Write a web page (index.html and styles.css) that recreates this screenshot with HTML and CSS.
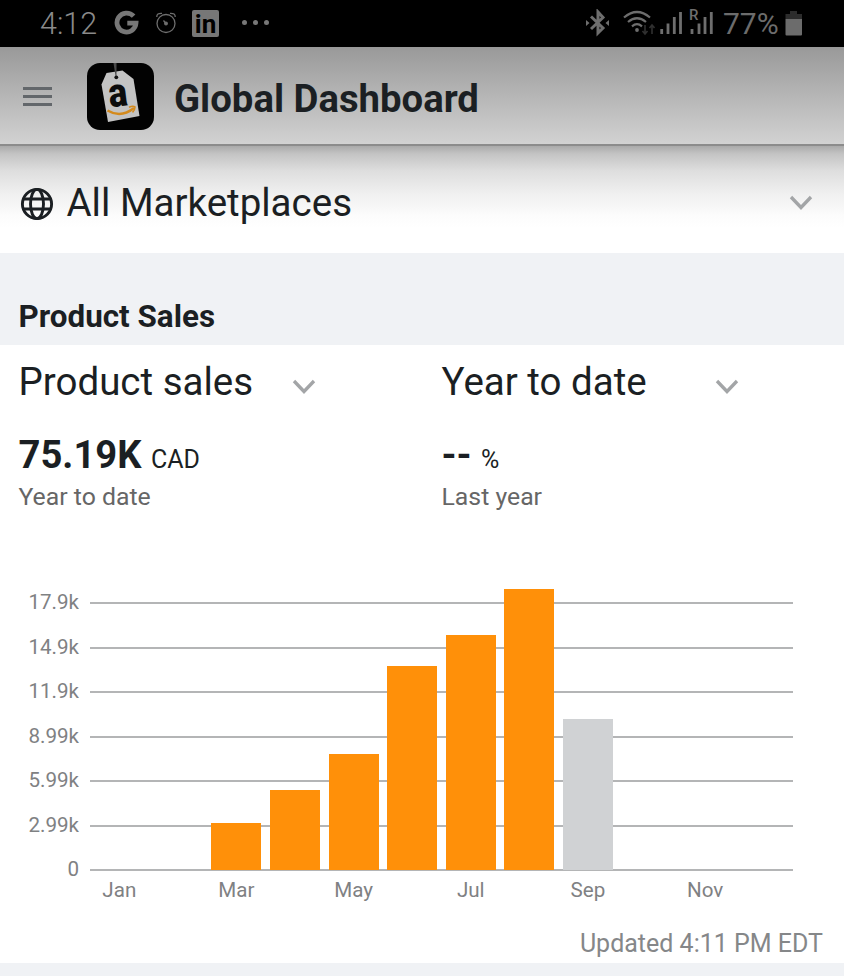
FILE: index.html
```html
<!DOCTYPE html>
<html lang="en">
<head>
<meta charset="utf-8">
<title>Global Dashboard</title>
<link rel="stylesheet" href="styles.css">
</head>
<body>
<div class="status">
  <span class="clock">4:12</span>
  <svg class="g" width="26" height="26" viewBox="0 0 26 26"><path d="M19.600 6.200A9.500 9.500 0 1 0 22 13.200H13.300" fill="none" stroke="currentColor" stroke-width="4.800"/></svg>
  <svg class="alarm" width="22" height="24" viewBox="0 0 22 24" fill="none" stroke="currentColor" stroke-width="1.3"><circle cx="11" cy="12.500" r="9"/><path d="M1.800 6Q1.500 2 7 2.300M20.200 6Q20.500 2 15 2.300M8.500 9.500l2.500 3"/><circle cx="11" cy="12.500" r="1.300" fill="currentColor"/></svg>
  <span class="linkedin">in</span>
  <span class="dots"><i></i><i></i><i></i></span>
  <span class="spacer"></span>
  <svg class="bt" width="24" height="28" viewBox="0 0 24 28"><path d="M5 7.500L17 19L12 24V3L17 8.500L5 20" fill="none" stroke="currentColor" stroke-width="3"/><path d="M0 11l3.500 3-3.500 3zM23 11l-3.500 3 3.500 3z" fill="currentColor"/></svg>
  <svg class="wifi" width="32" height="26" viewBox="0 0 32 26"><g fill="none" stroke="currentColor" stroke-width="2.200"><path d="M1 7.500Q14 -3.500 27 7.500M5 12Q14 4.500 23 12M9 16.300Q14 12 19 16.300"/></g><circle cx="14" cy="20" r="1.900" fill="currentColor"/><path d="M22 15v9m-2.500-3l2.500 3 2.500-3M29 24v-9m-2.500 3l2.500-3 2.500 3" fill="none" stroke="#303030" stroke-width="1.600"/></svg>
  <svg class="sig" width="23" height="24" viewBox="0 0 23 24"><path d="M1.700 18v5M8 12.500V23M14.300 6V23M20.500 1V23" stroke="currentColor" stroke-width="2.800" fill="none"/></svg>
  <svg class="sig2" width="26" height="30" viewBox="0 0 26 30"><text x="1" y="14" class="roam">R</text><path d="M4 23v5M11 17.500V28M17 11V28M23.300 6V28" stroke="currentColor" stroke-width="2.800" fill="none"/></svg>
  <span class="pct">77%</span>
  <svg class="bat" width="18" height="26" viewBox="0 0 18 26"><path d="M5 1h7v3h5v5H.5V4H5z" fill="#2c2c2c"/><path d="M.5 9h16.500v15.500q0 1-1 1H1.500q-1 0-1-1z" fill="currentColor"/></svg>
</div>

<header class="header">
  <div class="menu"><i></i><i></i><i></i></div>
  <svg class="logo" width="67" height="67" viewBox="0 0 67 67">
    <rect width="67" height="67" rx="13" fill="#020202"/>
    <path d="M19.500 10L35.500 7.500 46.500 16 52.500 53 21 59 14.500 21.500z" fill="#c3c3c3"/>
    <path d="M26.500 0l3 0 0 13-1 0z" fill="#4a4a4a"/>
    <circle cx="29.300" cy="14.300" r="1.900" fill="#111"/>
    <text x="0" y="0" class="a" transform="translate(23 44.500) rotate(-7) scale(.86 1)">a</text>
    <path d="M20.500 47.500Q34 55.500 47 45" fill="none" stroke="#d48a1c" stroke-width="2.400"/>
    <path d="M42 44.200q4-1.700 6-.3 0 3-2.500 5.500" fill="none" stroke="#d48a1c" stroke-width="1.500"/>
  </svg>
  <h1>Global Dashboard</h1>
</header>

<div class="market">
  <svg class="globe" width="34" height="34" viewBox="0 0 34 34" fill="none" stroke="currentColor" stroke-width="2.900"><circle cx="17" cy="17" r="14.600"/><ellipse cx="17" cy="17" rx="6.500" ry="14.600"/><path d="M3.500 12h27M3.500 22h27"/></svg>
  <span class="market-name">All Marketplaces</span>
  <svg class="chev" width="24" height="16" viewBox="0 0 24 16"><path d="M2 2l10 10.500L22 2"/></svg>
</div>

<h2 class="section-title">Product Sales</h2>

<main class="card">
  <div class="metrics">
    <div class="metric">
      <div class="select"><span>Product sales</span><svg class="chev" width="24" height="16" viewBox="0 0 24 16"><path d="M2 2l10 10.500L22 2"/></svg></div>
      <div class="value"><b>75.19K</b><span>CAD</span></div>
      <div class="sub">Year to date</div>
    </div>
    <div class="metric">
      <div class="select"><span>Year to date</span><svg class="chev" width="24" height="16" viewBox="0 0 24 16"><path d="M2 2l10 10.500L22 2"/></svg></div>
      <div class="value"><b>--</b><span>%</span></div>
      <div class="sub">Last year</div>
    </div>
  </div>

  <div class="chart">
    <div class="axis"><span>17.9k</span><span>14.9k</span><span>11.9k</span><span>8.99k</span><span>5.99k</span><span>2.99k</span><span>0</span></div>
    <div class="plot">
      <div class="lines"><i></i><i></i><i></i><i></i><i></i><i></i><i></i></div>
      <div class="bars">
        <i></i><i></i>
        <i class="bar" style="height:47px"></i>
        <i class="bar" style="height:80px"></i>
        <i class="bar" style="height:116px"></i>
        <i class="bar" style="height:204px"></i>
        <i class="bar" style="height:235px"></i>
        <i class="bar" style="height:281px"></i>
        <i class="bar partial" style="height:151px"></i>
        <i></i><i></i><i></i>
      </div>
    </div>
    <div class="months"><span>Jan</span><i></i><span>Mar</span><i></i><span>May</span><i></i><span>Jul</span><i></i><span>Sep</span><i></i><span>Nov</span><i></i></div>
  </div>
  <div class="updated">Updated 4:11 PM EDT</div>
</main>
</body>
</html>
```

FILE: styles.css
```css
* { box-sizing: border-box; }
body { margin: 0; height: 976px; overflow: hidden; background: #f0f2f5; color: #1b1f23; font-family: Roboto, "Liberation Sans", sans-serif; }
h1, h2 { margin: 0; }
svg { display: block; flex: none; }

.status { display: flex; align-items: center; height: 47px; padding: 0 41px 0 40px; background: #000; color: #6e6e6e; }
.clock, .pct { font-size: 30.5px; font-weight: 300; line-height: 46px; width: 59px; padding-top: 1px; color: #8a8a8a; }
.g { margin-left: 15px; margin-top: -2px; color: #777; }
.alarm { margin-left: 15px; margin-top: -1px; }
.linkedin { width: 27px; height: 27px; margin: -1px 0 0 15px; border-radius: 2px; background: #777; color: #000; font-weight: 700; font-size: 26px; line-height: 28px; text-align: center; }
.dots { display: flex; gap: 6px; margin: -2px 0 0 23px; }
.dots i { width: 5px; height: 5px; border-radius: 50%; background: #777; }
.spacer { flex: 1; }
.bt { margin: -1px 3px 0 0; }
.wifi { margin-left: 10px; margin-top: -2px; }
.sig { margin-left: 5px; margin-top: -1px; }
.sig2 { margin-left: 5px; margin-top: -5px; }
.roam { font: 500 15px Roboto, sans-serif; fill: currentColor; }
.pct { width: 57px; margin-left: 9px; font-size: 30px; font-weight: 400; color: #6c6c6c; }
.bat { margin-left: 5px; margin-top: -2px; color: #6c6c6c; }

.header { display: flex; align-items: center; height: 99px; padding: 1px 0 0 23px; background: linear-gradient(#999, #d2d2d2); border-bottom: 2px solid #8c8c8c; }
.menu { display: flex; flex-direction: column; gap: 5px; width: 29px; }
.menu i { height: 3px; background: #63676b; }
.logo { margin-left: 35px; }
.a { font: 900 41px Roboto, sans-serif; fill: #0c0c0c; }
h1 { margin-left: 20px; padding-top: 6px; font-size: 38.3px; line-height: 50px; }

.market { display: flex; align-items: center; height: 107px; padding: 7px 31px 0 20px; background: linear-gradient(#aaa 0, #c4c4c4 8px, #dedede 25px, #f0f0f0 48px, #fcfcfc 70px, #fff 82px); }
.globe { margin-top: 1px; }
.market-name { flex: 1; margin-left: 12.500px; font-size: 38.5px; line-height: 50px; }
.chev path { fill: none; stroke: #a3a5a7; stroke-width: 3.3; }

.section-title { height: 92px; padding: 44px 0 0 18.500px; background: #f0f2f5; font-size: 31.4px; line-height: 40px; }

.card { height: 618px; padding-top: 14px; background: #fff; }
.metrics { display: grid; grid-template-columns: 423px 1fr; padding-left: 18.500px; }
.select { display: flex; align-items: center; justify-content: space-between; width: 297px; height: 46px; font-size: 38.5px; line-height: 46px; }
.select .chev { margin-top: 9px; }
.value { display: flex; align-items: baseline; gap: 9.500px; height: 44px; margin-top: 28px; line-height: 45px; font-size: 38.2px; }
.value span { font-size: 25px; }
.sub { margin-top: 5px; color: #666; font-size: 24.8px; line-height: 30px; }

.chart { display: grid; grid-template-columns: 79px 703px; column-gap: 11px; margin-top: 76px; }
.axis { display: flex; flex-direction: column; justify-content: space-between; height: 294px; padding-top: 1px; color: #7f8183; font-size: 20.6px; line-height: 26px; text-align: right; }
.plot { display: grid; height: 282px; }
.lines, .bars { grid-area: 1 / 1; }
.lines { display: flex; flex-direction: column; justify-content: space-between; padding-top: 14px; margin-bottom: -1px; }
.lines i { height: 2px; background: #b4b5b6; }
.bars { display: grid; grid-template-columns: repeat(12, 1fr); align-items: end; justify-items: center; }
.bar { width: 50px; background: #ff9009; }
.bar.partial { background: #d0d2d4; }
.months { grid-column: 2; display: grid; grid-template-columns: repeat(12, 1fr); justify-items: center; margin-top: -5px; color: #7f8183; font-size: 20.6px; line-height: 26px; }
.updated { margin: 26px 21px 0 0; color: #858789; font-size: 25px; line-height: 30px; text-align: right; }
```
